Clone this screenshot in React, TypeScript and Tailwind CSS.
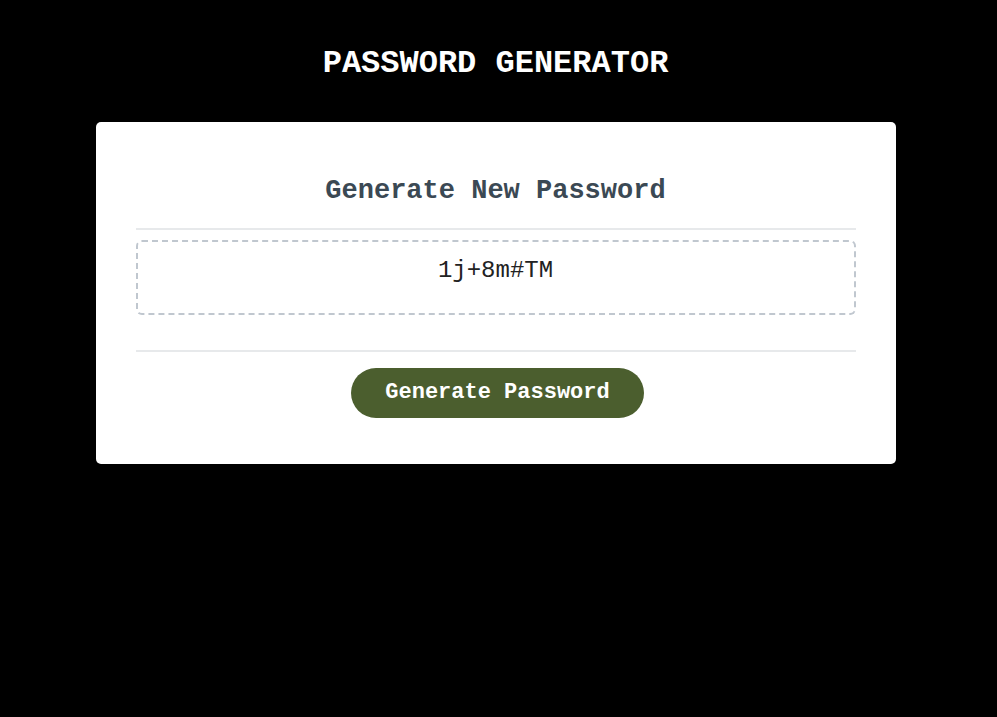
import React from "react";

export default function App() {
  return (
    <div
      className="min-h-screen bg-black pl-5 pr-[26px] pt-[46px]"
      style={{ fontFamily: '"Liberation Mono", "Courier New", monospace' }}
    >
      <header className="text-center">
        <h1 className="m-0 text-[32px] font-bold leading-[36px] text-white">
          PASSWORD GENERATOR
        </h1>
      </header>
      <div className="mx-auto mt-[40px] max-w-[800px] rounded-[5px] bg-white px-10 py-[30px] text-[18px] text-[#3b4954]">
        <div>
          <h2 className="mb-[21px] mt-[24px] text-center text-[27px] font-bold leading-[31px]">
            Generate New Password
          </h2>
          <div className="h-[2px] w-full bg-[#e7e9eb]" />
        </div>
        <div className="pb-[35px] pt-[10px]">
          <div className="rounded-[6px] border-2 border-dashed border-[#c0c7cf] px-[15px] pb-[29px] pt-[15px] text-center text-[24px] leading-[27px] text-[#222]">
            1j+8m#TM
          </div>
        </div>
        <div className="text-center">
          <div className="h-[2px] w-full bg-[#e7e9eb]" />
          <button className="mb-4 ml-5 mr-4 mt-4 inline-block cursor-pointer rounded-[25px] bg-[#4b5e2e] px-[34px] py-[14px] text-[22px] font-bold leading-[22px] text-white">
            Generate Password
          </button>
        </div>
      </div>
    </div>
  );
}
